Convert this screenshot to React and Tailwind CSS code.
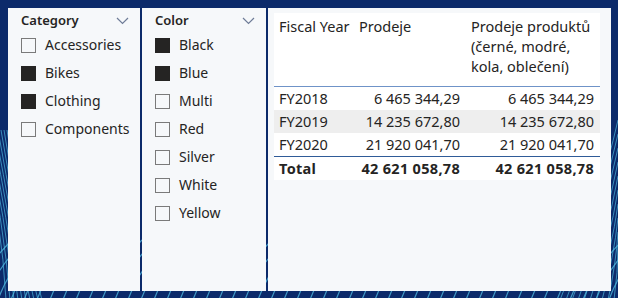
import React from 'react';

const categories = [
  { label: 'Accessories', checked: false },
  { label: 'Bikes', checked: true },
  { label: 'Clothing', checked: true },
  { label: 'Components', checked: false },
];

const colors = [
  { label: 'Black', checked: true },
  { label: 'Blue', checked: true },
  { label: 'Multi', checked: false },
  { label: 'Red', checked: false },
  { label: 'Silver', checked: false },
  { label: 'White', checked: false },
  { label: 'Yellow', checked: false },
];

const rows = [
  { year: 'FY2018', a: '6 465 344,29', b: '6 465 344,29', bg: 'bg-white' },
  { year: 'FY2019', a: '14 235 672,80', b: '14 235 672,80', bg: 'bg-[#eeeeee]' },
  { year: 'FY2020', a: '21 920 041,70', b: '21 920 041,70', bg: 'bg-white' },
];

// background wave lines
const Waves = () => {
  const fan = [];
  for (let i = 0; i < 60; i++) {
    const x = -80 + i * 13;
    fan.push(
      <path key={'f' + i} d={`M ${x + 40} 240 Q ${x + 10} 270 ${x} 300`} stroke="#4fb6dd" strokeWidth="1.2" fill="none" opacity="0.8" />
    );
  }
  const curves = [];
  for (let i = 0; i < 10; i++) {
    curves.push(
      <path key={'c' + i} d={`M ${-20 + i * 3} 130 Q ${2 + i * 2} 220 ${6 + i * 4} 300`} stroke="#4fb6dd" strokeWidth="1" fill="none" opacity="0.7" />
    );
    curves.push(
      <path key={'r' + i} d={`M 618 ${120 + i * 14} Q ${600 + i * 2} ${200 + i * 8} ${560 + i * 6} 300`} stroke="#4fb6dd" strokeWidth="1" fill="none" opacity="0.7" />
    );
  }
  return (
    <svg className="absolute inset-0" width="618" height="298" viewBox="0 0 618 298">
      {fan}
      {curves}
    </svg>
  );
};

const Check = ({ checked }) => (
  <span
    className={`w-[15px] h-[15px] shrink-0 border ${checked ? 'bg-[#252423] border-[#252423]' : 'bg-transparent border-[#7a7a7a]'}`}
  />
);

const Chevron = () => (
  <svg width="13" height="8" viewBox="0 0 13 8">
    <polyline points="1,1 6.5,6.5 12,1" fill="none" stroke="#6f7c97" strokeWidth="1.2" />
  </svg>
);

const Slicer = ({ title, items, width }) => (
  <div className={`${width} h-[283px] bg-[#f6f8fa] pl-[13px] pr-[11px] pt-[4px]`}>
    <div className="flex items-center justify-between h-[18px]">
      <span className="text-[13px] font-semibold text-[#252423]">{title}</span>
      <Chevron />
    </div>
    <div className="mt-[1px]">
      {items.map((it) => (
        <div key={it.label} className="flex items-center h-[28px] gap-[9px]">
          <Check checked={it.checked} />
          <span className="text-[14px] text-[#252423] leading-none">{it.label}</span>
        </div>
      ))}
    </div>
  </div>
);

export default function App() {
  return (
    <div
      className="relative w-[618px] h-[298px] overflow-hidden bg-[#0c2a6a]"
      style={{ fontFamily: '"Noto Sans", "Open Sans", sans-serif' }}
    >
      <Waves />
      <div className="relative flex gap-[2px] pt-[8px] pl-[8px]">
        <Slicer title="Category" items={categories} width="w-[132px]" />
        <Slicer title="Color" items={colors} width="w-[124px]" />
        <div className="w-[343px] h-[283px] bg-[#f6f8fa] pt-[5px] pl-[6px]">
          <div className="w-[326px] bg-white text-[14.5px] text-[#252423]">
            <div className="grid grid-cols-[80px_112px_134px] border-b border-[#6f93c8] h-[74px] leading-[20px] pt-[3px]">
              <div className="pl-[5px]">Fiscal Year</div>
              <div className="pl-[5px]">Prodeje</div>
              <div className="pl-[5px]">Prodeje produktů (černé, modré, kola, oblečení)</div>
            </div>
            {rows.map((r) => (
              <div key={r.year} className={`grid grid-cols-[80px_112px_134px] h-[23px] items-center ${r.bg}`}>
                <div className="pl-[5px]">{r.year}</div>
                <div className="text-right pr-[6px]">{r.a}</div>
                <div className="text-right pr-[6px]">{r.b}</div>
              </div>
            ))}
            <div className="grid grid-cols-[80px_112px_134px] h-[24px] items-center border-t border-[#2f5b98] font-bold tracking-[0.3px]">
              <div className="pl-[5px]">Total</div>
              <div className="text-right pr-[6px]">42 621 058,78</div>
              <div className="text-right pr-[6px]">42 621 058,78</div>
            </div>
          </div>
        </div>
      </div>
    </div>
  );
}
